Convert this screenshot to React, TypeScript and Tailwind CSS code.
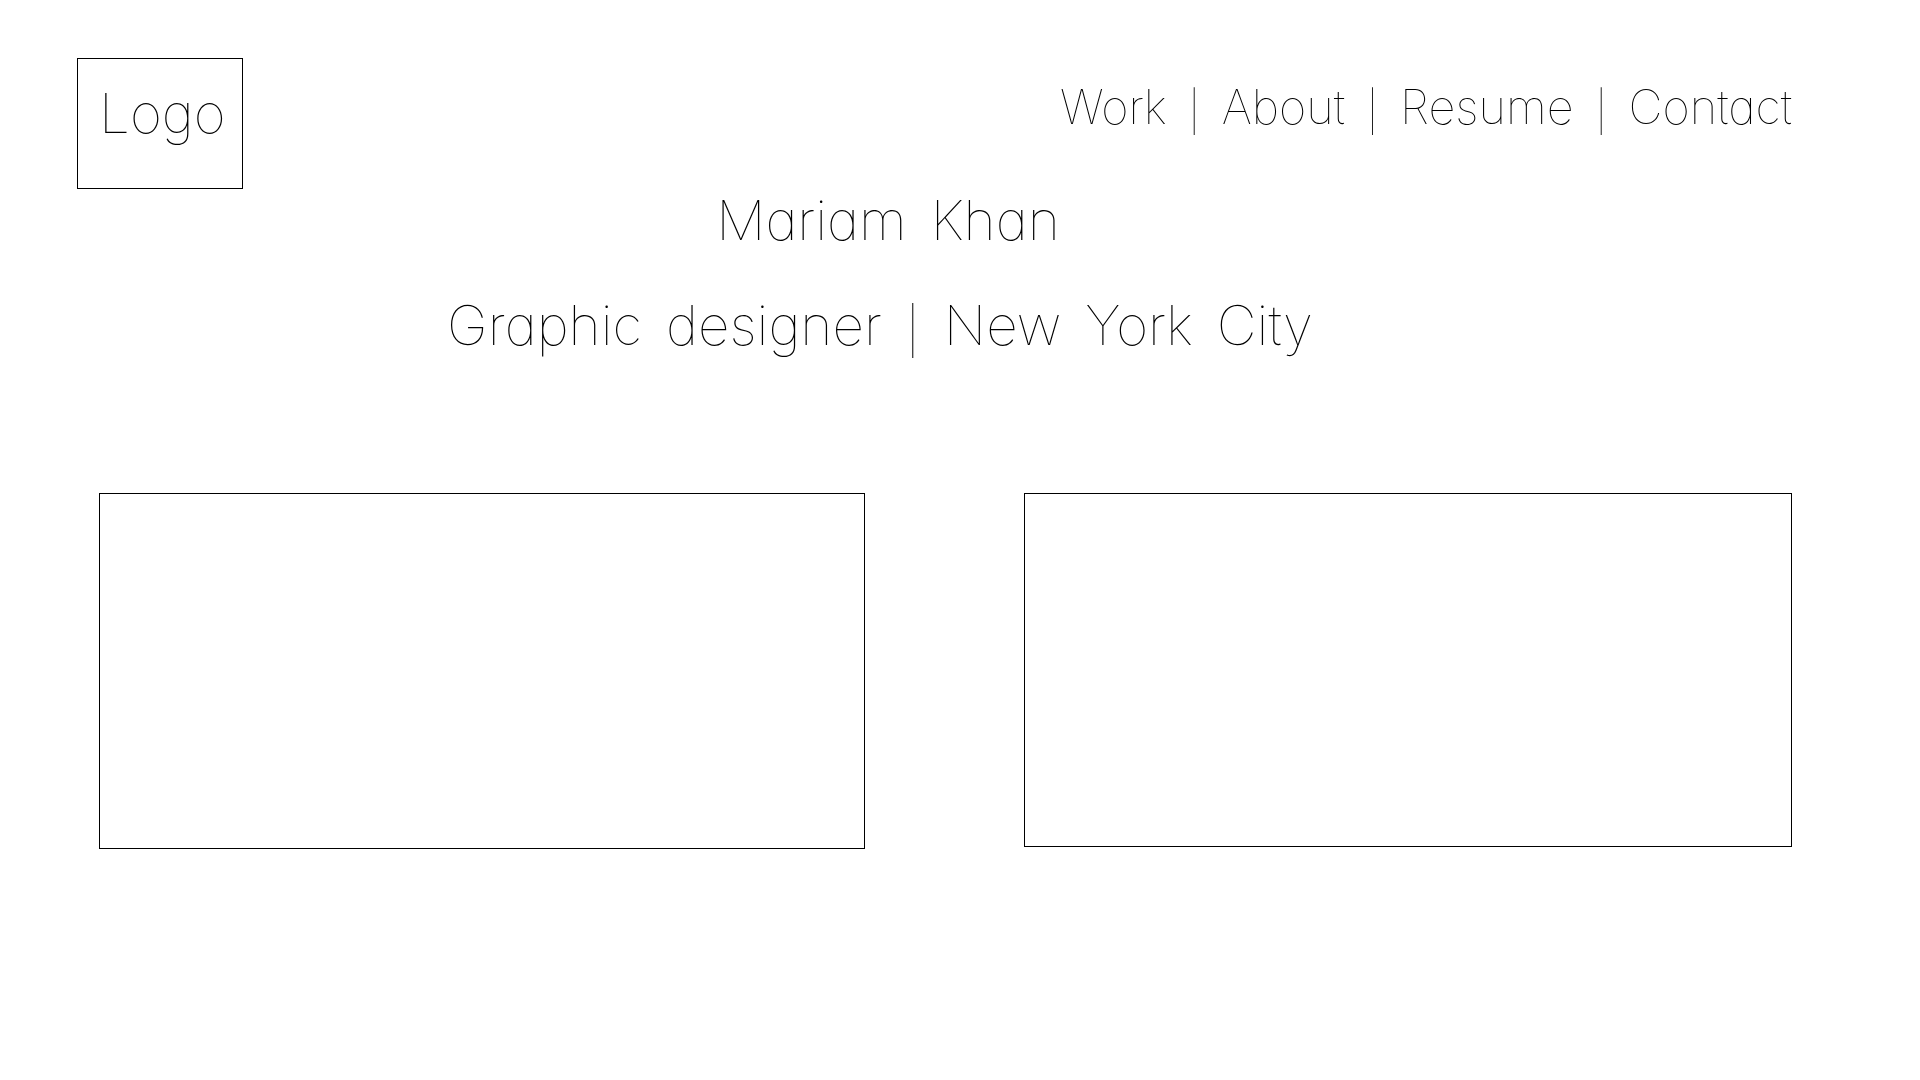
const navItems = ["Work", "About", "Resume", "Contact"];

function Bar({ className }: { className: string }) {
  return (
    <span aria-hidden="true" className={`text-center ${className}`}>
      |
    </span>
  );
}

function Words({ text }: { text: string }) {
  return (
    <span className="flex gap-6">
      {text.split(" ").map((word) => (
        <span key={word}>{word}</span>
      ))}
    </span>
  );
}

export default function App() {
  return (
    <div className="min-h-screen bg-white font-[Inter,sans-serif] font-thin text-black antialiased [font-feature-settings:'cv11']">
      <header className="flex items-start justify-between pt-[58px] pr-32 pl-[77px] will-change-transform">
        <a href="#home" className="h-[131px] w-[166px] border border-black pt-[23px] pl-[21px] text-[55px] leading-[62px]">
          Logo
        </a>
        <nav className="mt-[21px] flex text-[47px] leading-[56px]">
          {navItems.map((item, i) => (
            <div key={item} className="flex">
              {i > 0 && <Bar className="w-[55px] text-[40px] leading-[66px]" />}
              <a href={`#${item.toLowerCase()}`}>{item}</a>
            </div>
          ))}
        </nav>
      </header>

      <main>
        <section className="flex flex-col items-center gap-[43px] pr-40 text-[55px] leading-[62px] will-change-transform">
          <h1 className="pl-4">
            <Words text="Mariam Khan" />
          </h1>
          <p className="flex h-[62px]">
            <Words text="Graphic designer" />
            <Bar className="w-[62px] text-[46px] leading-[72px]" />
            <Words text="New York City" />
          </p>
        </section>

        <section aria-label="Projects" className="mt-[137px] grid grid-cols-[766fr_768fr] items-start gap-[159px] pr-32 pl-[99px]">
          <div className="h-[356px] border border-black" />
          <div className="h-[354px] border border-black" />
        </section>
      </main>
    </div>
  );
}
